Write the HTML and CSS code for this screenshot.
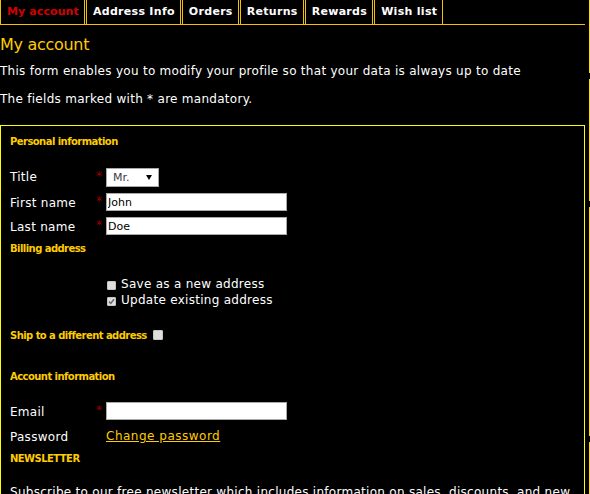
FILE: index.html
```html
<!DOCTYPE html>
<html>
<head>
<meta charset="utf-8">
<title>My account</title>
<link rel="stylesheet" href="styles.css">
</head>
<body>
<div class="page">
  <ul class="tabs">
    <li class="tab active">My account</li>
    <li class="tab">Address Info</li>
    <li class="tab">Orders</li>
    <li class="tab">Returns</li>
    <li class="tab">Rewards</li>
    <li class="tab">Wish list</li>
  </ul>

  <h1 class="title">My account</h1>
  <p class="intro">This form enables you to modify your profile so that your data is always up to date</p>
  <p class="intro second">The fields marked with * are mandatory.</p>

  <div class="box">
    <h3 class="section first">Personal information</h3>

    <div class="row row-title">
      <span class="label">Title</span>
      <span class="req">*</span>
      <div class="select"><span>Mr.</span><svg class="arrow" width="6" height="5" viewBox="0 0 6 5"><polygon points="0,0 6,0 3,5" fill="#000"/></svg></div>
    </div>
    <div class="row row-field">
      <span class="label">First name</span>
      <span class="req">*</span>
      <input class="text" type="text" value="John">
    </div>
    <div class="row row-field">
      <span class="label">Last name</span>
      <span class="req">*</span>
      <input class="text" type="text" value="Doe">
    </div>

    <h3 class="section billing">Billing address</h3>
    <div class="checks">
      <div class="check"><span class="cb"></span><span class="cb-label">Save as a new address</span></div>
      <div class="check"><span class="cb"><svg width="7" height="7" viewBox="0 0 7 7"><path d="M1 3.6 L2.8 5.4 L6 1.2" fill="none" stroke="#6a6a6a" stroke-width="1.6"/></svg></span><span class="cb-label">Update existing address</span></div>
    </div>

    <div class="ship">
      <h3 class="section inline">Ship to a different address</h3>
      <span class="cb cb-ship"></span>
    </div>

    <h3 class="section account">Account information</h3>
    <div class="row row-field row-email">
      <span class="label">Email</span>
      <span class="req">*</span>
      <input class="text" type="text" value="">
    </div>
    <div class="row row-field row-pass">
      <span class="label">Password</span>
      <span class="req"></span>
      <a class="link" href="#">Change password</a>
    </div>

    <h3 class="section news">NEWSLETTER</h3>
    <p class="subscribe">Subscribe to our free newsletter which includes information on sales, discounts, and new products.</p>
  </div>
</div>
<div class="edge"></div>
</body>
</html>
```
FILE: styles.css
```css
html, body {
  margin: 0;
  padding: 0;
  background: #000;
}
body {
  color: #fff;
  font-family: "DejaVu Sans", sans-serif;
  font-size: 12px;
  letter-spacing: 0.28px;
  overflow: hidden;
}
.page {
  width: 585px;
}

/* tabs */
.tabs {
  list-style: none;
  margin: -3px 0 0 0;
  padding: 0;
  display: flex;
  gap: 1px;
  border-bottom: 1px solid #f2c200;
  height: 27px;
}
.tab {
  height: 27px;
  line-height: 24px;
  padding: 2px 5px 0 6px;
  box-sizing: border-box;
  border: 1px solid #f2c200;
  border-bottom: none;
  border-radius: 3px 3px 0 0;
  font-weight: bold;
  font-size: 11px;
  letter-spacing: 0.3px;
  color: #fff;
}
.tab.active {
  color: #d40000;
  letter-spacing: 0.1px;
}

/* header texts */
.title {
  margin: 10px 0 0 0;
  font-size: 16px;
  line-height: 20px;
  font-weight: normal;
  letter-spacing: -0.3px;
  color: #ffcc00;
}
.intro {
  margin: 9px 0 0 0;
  line-height: 15px;
  white-space: nowrap;
}
.intro.second {
  margin-top: 13px;
}

/* form box */
.box {
  margin-top: 18px;
  border: 1px solid #ffff00;
  padding: 10px 0 20px 9px;
}
.section {
  margin: 0;
  font-size: 10px;
  line-height: 12px;
  font-weight: bold;
  letter-spacing: -0.55px;
  color: #ffcc00;
}
.section.billing { margin-top: 8px; }
.section.account { margin-top: 29px; }
.section.news { margin-top: 8px; }

.row {
  display: flex;
  align-items: flex-start;
  height: 18px;
  margin-top: 6px;
}
.row-title {
  height: 19px;
  margin-top: 20px;
}
.row-email { margin-top: 19px; }
.row-pass { margin-top: 7px; }

.label {
  width: 86px;
  flex: none;
  line-height: 18px;
  padding-top: 1px;
  white-space: nowrap;
}
.row-title .label {
  line-height: 19px;
  padding-top: 0;
}
.req {
  width: 10px;
  flex: none;
  font-size: 12px;
  line-height: 12px;
  margin-top: 2px;
  color: #990000;
  letter-spacing: 0;
}

.select {
  width: 53px;
  height: 19px;
  box-sizing: border-box;
  border: 1px solid #a9a9a9;
  background: #fff;
  display: flex;
  align-items: center;
  justify-content: space-between;
  padding: 0 6px 0 6px;
  font-size: 11px;
  letter-spacing: 0;
  color: #3a3a4a;
}
.arrow {
  display: block;
  margin-top: -1px;
}

.text {
  width: 181px;
  height: 18px;
  box-sizing: border-box;
  margin: 0;
  border: 1px solid #a9a9a9;
  padding: 0 0 0 1px;
  background: #fff;
  color: #000;
  font-family: "DejaVu Sans", sans-serif;
  font-size: 11px;
  letter-spacing: 0;
  outline: none;
}

/* checkboxes */
.checks {
  margin-top: 21px;
}
.check {
  display: flex;
  align-items: flex-start;
  height: 16px;
  line-height: 16px;
  padding-left: 97px;
}
.cb {
  width: 9px;
  height: 9px;
  flex: none;
  box-sizing: border-box;
  border: 1px solid #c4c4c4;
  border-radius: 1px;
  background: #dedede;
  margin-top: 5px;
  margin-right: 5px;
  display: flex;
  align-items: center;
  justify-content: center;
}
.cb svg { display: block; }
.cb-label { white-space: nowrap; }

.ship {
  margin-top: 22px;
  display: flex;
  align-items: flex-start;
}
.cb-ship {
  width: 10px;
  height: 10px;
  margin: 0 0 0 6px;
}

.link {
  color: #ffcc00;
  text-decoration: underline;
  line-height: 18px;
  letter-spacing: 0.5px;
  white-space: nowrap;
}

.subscribe {
  margin: 20px 0 0 0;
  line-height: 15px;
  padding-right: 4px;
}

/* decorative edge line at the window border */
.edge {
  position: fixed;
  top: 0;
  right: 0;
  width: 1px;
  height: 494px;
  background: linear-gradient(to bottom,
    #ffdd00 0, #ffdd00 73px, #000 73px, #000 79px,
    #ffdd00 79px, #ffdd00 201px, #000 201px, #000 207px,
    #ffdd00 207px, #ffdd00 436px, #000 436px, #000 442px,
    #ffdd00 442px, #ffdd00 494px);
}
```
